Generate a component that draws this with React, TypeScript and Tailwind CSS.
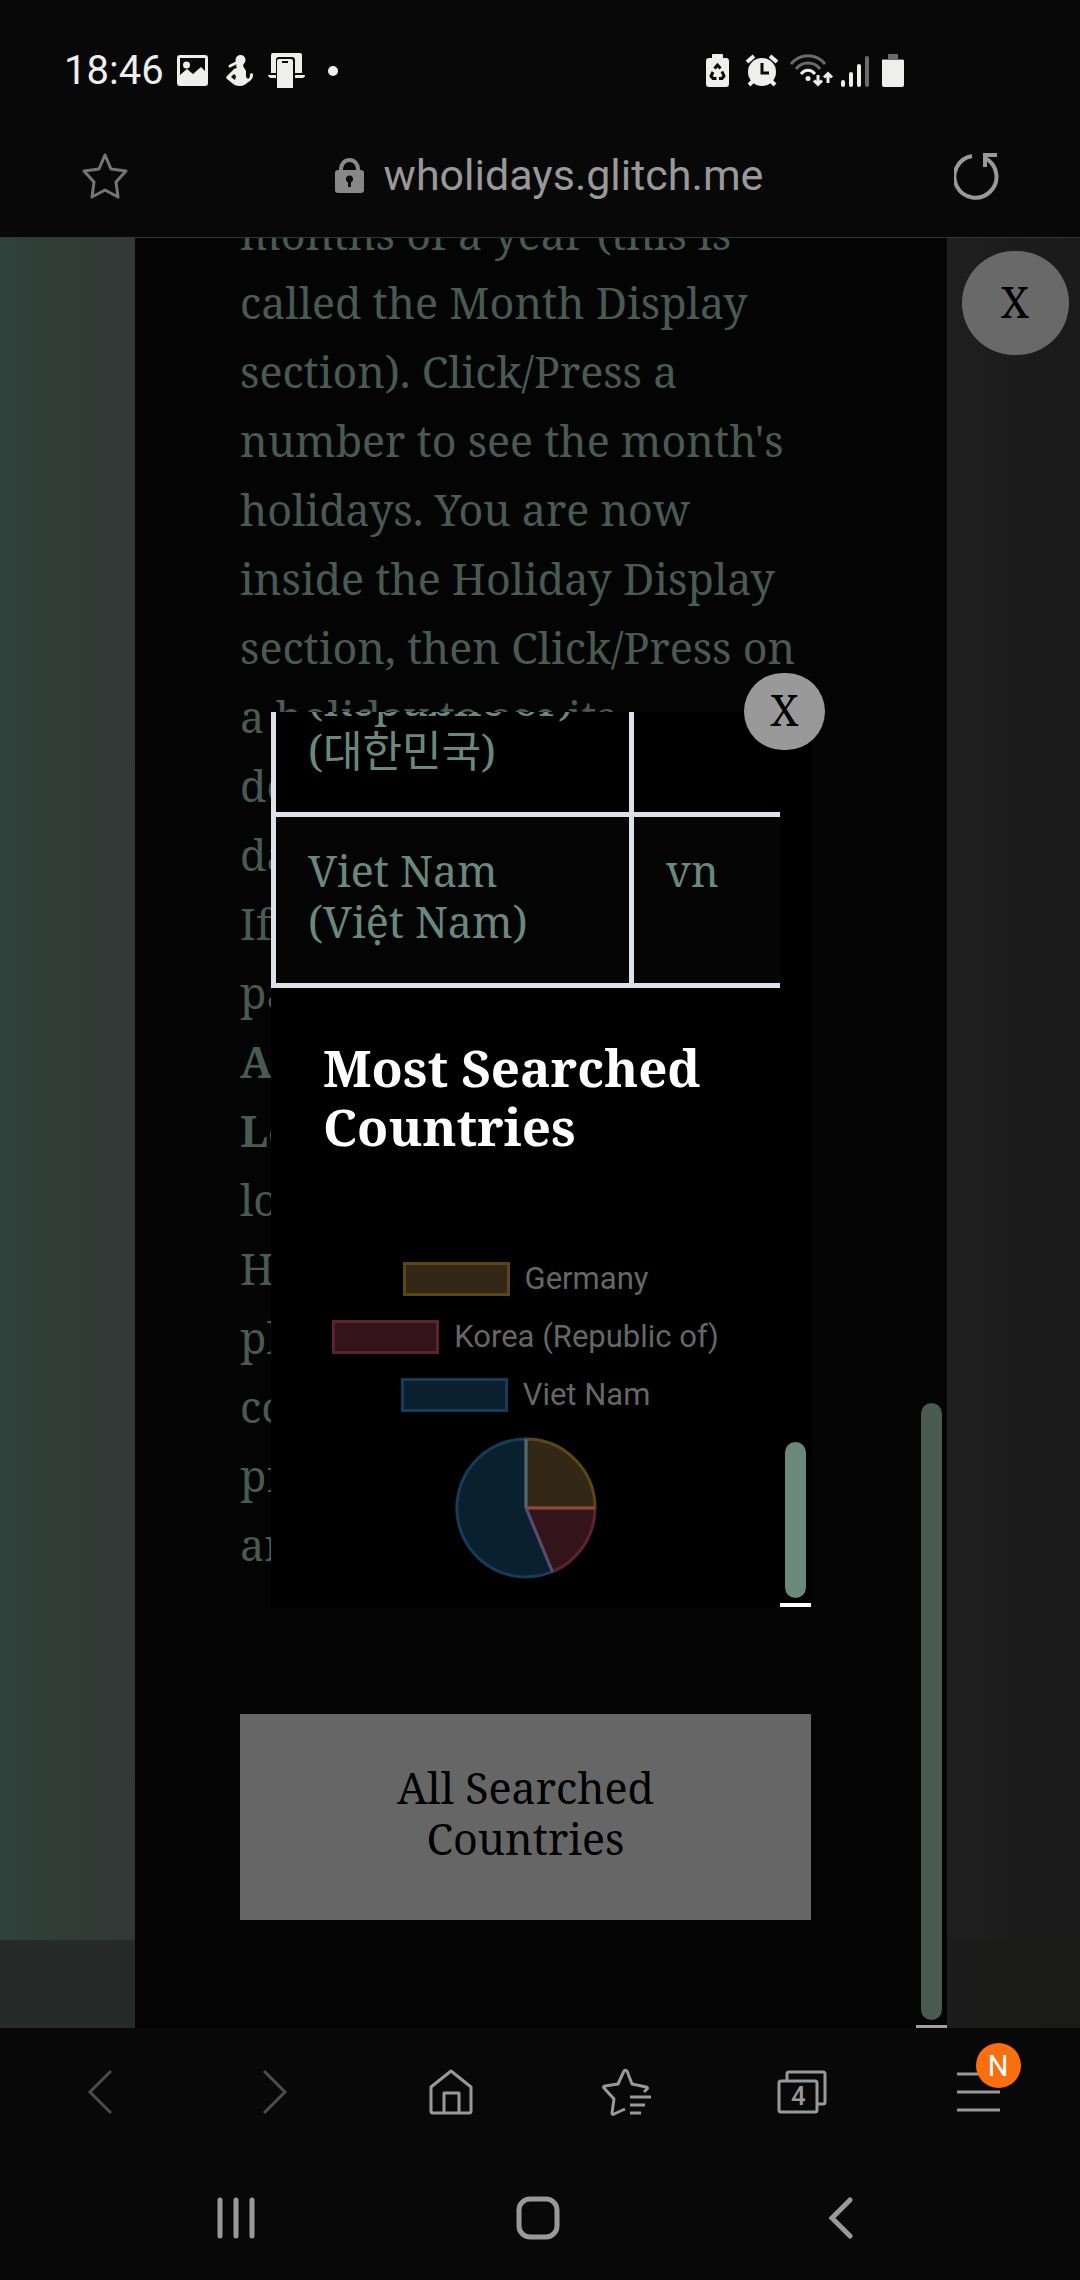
import type { ReactNode } from "react";

const SERIF = "font-['Noto_Serif','DejaVu_Serif_Condensed','DejaVu_Serif','Noto_Sans_CJK_KR',serif]";

function StatusBar() {
  return (
    <div className="flex h-[117px] shrink-0 items-center justify-between pt-6 pr-[176px] pl-[64px] text-[#eeeeec]">
      <div className="flex items-center">
        <time className="w-[113px] text-[40px] leading-none">18:46</time>
        <svg width="31" height="31" viewBox="0 0 31 31" aria-hidden="true">
          <path
            fill="currentColor"
            fillRule="evenodd"
            d="M3 0h25a3 3 0 0 1 3 3v25a3 3 0 0 1-3 3H3a3 3 0 0 1-3-3V3a3 3 0 0 1 3-3Zm0 3v17l7-6 6 5 8-7 4 4V3H3Z"
          />
          <circle cx="9.5" cy="10" r="3.5" fill="currentColor" />
        </svg>
        <svg className="ml-[18px]" width="28" height="31" viewBox="0 0 28 31" aria-hidden="true">
          <circle cx="14.500" cy="5" r="5" fill="currentColor" />
          <path
            fill="currentColor"
            d="M11 8h7l-1 3 3 5v6l2 2c2-1 2-3 2-5 1-1 3-1 3 1 0 4-3 6-6 8-2 2-4 3-7 3-4 0-6-1-8-3l-5-4c-1-1-1-2 0-3l6-6c1-1 2-2 4-2l-1-2Z"
          />
          <path fill="none" stroke="currentColor" strokeWidth="3" strokeLinecap="round" d="M4 11l6-3" />
          <path fill="#080808" d="M8 19l-3 3 4 3 1-4Z" />
        </svg>
        <svg className="ml-[14px]" width="37" height="35" viewBox="0 0 37 35" aria-hidden="true">
          <path
            fill="currentColor"
            d="M3 2a2 2 0 0 1 2-2h27a2 2 0 0 1 2 2v18h-7V7a3 3 0 0 0-3-3H11a3 3 0 0 0-3 3v13H3ZM0 22h8v3H3c-1 0-3-1-3-3ZM27 22h10c0 2-1 3-3 3h-7ZM9 8a2 2 0 0 1 2-2h12a2 2 0 0 1 2 2v27H9Z"
          />
          <path stroke="#080808" strokeWidth="2" d="M14 9h6" />
        </svg>
        <span className="ml-[23px] size-[10px] rounded-full bg-[#eeeeec]" />
      </div>
      <div className="flex items-center">
        <svg width="23" height="33" viewBox="0 0 23 33" aria-hidden="true">
          <path
            fill="currentColor"
            d="M6 1a1 1 0 0 1 1-1h9a1 1 0 0 1 1 1v3h3a3 3 0 0 1 3 3v23a3 3 0 0 1-3 3H3a3 3 0 0 1-3-3V7a3 3 0 0 1 3-3h3Z"
          />
          <path
            fill="none"
            stroke="#080808"
            strokeWidth="3"
            d="M8.500 14.500l3-3.500 3 3.500M16 17.500l2 4.500-2 2.500h-3M10.500 24.500H7L5 22l2-4"
          />
        </svg>
        <svg className="ml-4" width="34" height="33" viewBox="0 0 34 33" aria-hidden="true">
          <g stroke="currentColor" strokeWidth="4">
            <path d="M2 8l7-6M32 8l-7-6M8 27l-4 4M26 27l4 4" />
          </g>
          <circle cx="17" cy="18" r="14" fill="currentColor" />
          <path fill="none" stroke="#080808" strokeWidth="3" d="M17 9v10h7" />
        </svg>
        <svg className="ml-[11px]" width="43" height="33" viewBox="0 0 43 33" aria-hidden="true">
          <g fill="none" strokeWidth="3">
            <path stroke="#6b6b6b" d="M1 10C10-1 26-1 35 10M6 15c6-8 18-8 24 0" />
            <path stroke="currentColor" d="M11 20c4-5 10-5 14 0" />
          </g>
          <circle cx="18" cy="24.500" r="2.500" fill="currentColor" />
          <path
            fill="none"
            stroke="currentColor"
            strokeWidth="3"
            d="M28 21v9M24 26.500l4 4 4-4M38 29v-8M34 23.500l4-4 4 4"
          />
        </svg>
        <svg className="ml-2" width="28" height="32" viewBox="0 0 28 32" aria-hidden="true">
          <g strokeWidth="4" strokeLinecap="round">
            <path stroke="currentColor" d="M2 27v3M10 19v11M18 11v19" />
            <path stroke="#6b6b6b" d="M26 3v27" />
          </g>
        </svg>
        <svg className="ml-[13px]" width="22" height="33" viewBox="0 0 22 33" aria-hidden="true">
          <path fill="#6b6b6b" d="M6 0h10v5h5v2H0V5h6Z" />
          <path fill="currentColor" d="M0 6h22v25a2 2 0 0 1-2 2H2a2 2 0 0 1-2-2Z" />
        </svg>
      </div>
    </div>
  );
}

function AddressBar() {
  return (
    <div className="flex h-[121px] shrink-0 items-center justify-between border-b border-[#343434] pr-20 pb-[3px] pl-[82px] text-[#999999]">
      <button type="button" aria-label="Bookmark this page" className="text-[#747474]">
        <svg width="46" height="46" viewBox="0 0 46 46" fill="none" stroke="currentColor" strokeWidth="3" strokeLinejoin="round">
          <path d="M23 2l6 14 15 2-10 11 2 15-13-7-13 7 2-15L2 18l15-2Z" />
        </svg>
      </button>
      <div className="ml-4 flex items-center gap-5">
        <svg width="29" height="35" viewBox="0 0 29 35" className="text-[#888888]" aria-hidden="true">
          <path fill="none" stroke="currentColor" strokeWidth="4" d="M6 14v-3a8.500 9 0 0 1 17 0v3" />
          <rect y="12" width="29" height="23" rx="3" fill="currentColor" />
          <circle cx="14.500" cy="21" r="3.500" fill="#080808" />
          <path stroke="#080808" strokeWidth="3" d="M14.500 21v8" />
        </svg>
        <span className="text-[43px] leading-none">wholidays.glitch.me</span>
      </div>
      <button type="button" aria-label="Reload">
        <svg width="46" height="48" viewBox="0 0 46 48" fill="none" stroke="currentColor" strokeWidth="4">
          <path d="M18 4A21 21 0 1 0 31 6" />
          <path d="M43 3H31v12" />
        </svg>
      </button>
    </div>
  );
}

const instructions: { text: string; strong?: boolean }[] = [
  { text: "months of a year (this is" },
  { text: "called the Month Display" },
  { text: "section). Click/Press a" },
  { text: "number to see the month's" },
  { text: "holidays. You are now" },
  { text: "inside the Holiday Display" },
  { text: "section, then Click/Press on" },
  { text: "a holiday to see its" },
  { text: "description and the" },
  { text: "date of the holiday." },
  { text: "If you are on a" },
  { text: "page with the" },
  { text: "Automatic", strong: true },
  { text: "Location", strong: true },
  { text: "local country set," },
  { text: "Holidays of the" },
  { text: "place are shown" },
  { text: "countries can be" },
  { text: "pressed as they" },
  { text: "are listed." },
];

function InstructionsPanel() {
  return (
    <section className="flex min-w-0 flex-1 overflow-hidden bg-[#040404]">
      <div className="flex min-w-0 flex-1 flex-col justify-end px-[105px] pb-[108px]">
        <p className="shrink-0 text-[43px] leading-[69px] whitespace-nowrap text-[#485a52]">
          {instructions.map((line) => (
            <span key={line.text} className={line.strong ? "block font-bold" : "block"}>
              {line.text}
            </span>
          ))}
        </p>
        <button
          type="button"
          className="mt-[135px] shrink-0 bg-[#666666] px-[140px] pt-12 pb-14 text-[43px] leading-[51px] text-black"
        >
          All Searched Countries
        </button>
      </div>
      <div className="flex w-[31px] flex-col items-center justify-end border-b-[3px] border-[#a0a0a0] pb-[5px]">
        <span className="h-[617px] w-[21px] rounded-full bg-[#485a52]" />
      </div>
    </section>
  );
}

const countries = [
  { names: ["Korea", "(Republic of)", "(대한민국)"], code: "kr" },
  { names: ["Viet Nam", "(Việt Nam)"], code: "vn" },
];

const legend = [
  { label: "Germany", swatch: "border-[#5c4618] bg-[#332715]" },
  { label: "Korea (Republic of)", swatch: "border-[#5c2230] bg-[#33141a]" },
  { label: "Viet Nam", swatch: "border-[#153c58] bg-[#0a202e]" },
];

function PieChart() {
  return (
    <svg className="mt-[25px]" width="142" height="142" viewBox="-71 -71 142 142" role="img" aria-label="Most searched countries">
      <g strokeWidth="3">
        <path fill="#332715" stroke="#5c4618" d="M0 0V-69A69 69 0 0 1 69 0Z" />
        <path fill="#33141a" stroke="#5c2230" d="M0 0H69A69 69 0 0 1 26.400 63.700Z" />
        <path fill="#0a202e" stroke="#153c58" d="M0 0L26.400 63.700A69 69 0 1 1 0-69Z" />
        <path stroke="#8a4a3c" d="M0 0H69" />
        <path stroke="#56696a" d="M0 0V-69" />
        <path stroke="#594a70" d="M0 0L26.400 63.700" />
      </g>
    </svg>
  );
}

function CountriesDialog() {
  return (
    <div role="dialog" aria-label="All searched countries" className="absolute top-[474px] left-1/4 ml-px flex h-1/2 w-1/2 bg-black">
      <div className="flex min-w-0 flex-1 flex-col justify-end overflow-hidden pb-7">
        <table className="w-full shrink-0 table-fixed border-separate border-spacing-0 border-b-[5px] border-l-[5px] border-[#dfe1e8] text-left text-[43px] leading-[51px] text-[#6b887c]">
          <tbody>
            {countries.map((country) => (
              <tr key={country.code} className="align-top even:bg-[#040404]">
                <td className="w-[358px] border-t-[5px] border-r-[5px] border-[#dfe1e8] px-8 pt-7 pb-9">
                  {country.names.map((name) => (
                    <span key={name} className="block whitespace-nowrap">
                      {name}
                    </span>
                  ))}
                </td>
                <td className="border-t-[5px] border-[#dfe1e8] px-8 pt-7 pb-9">{country.code}</td>
              </tr>
            ))}
          </tbody>
        </table>
        <h2 className="mt-[50px] shrink-0 px-[52px] text-[51px] leading-[59px] font-bold text-white">
          Most Searched Countries
        </h2>
        <div className="mt-[106px] flex shrink-0 flex-col items-center font-[Roboto,sans-serif]">
          <ul className="flex flex-col items-center gap-6 text-[31px] leading-[34px] text-[#666666]">
            {legend.map((item) => (
              <li key={item.label} className="flex gap-[15px]">
                <span className={`w-[107px] border-[3px] ${item.swatch}`} />
                {item.label}
              </li>
            ))}
          </ul>
          <PieChart />
        </div>
      </div>
      <div className="flex w-[31px] flex-col items-center justify-end border-b-4 border-white pb-[5px]">
        <span className="h-[156px] w-[21px] rounded-full bg-[#6b887c]" />
      </div>
      <button
        type="button"
        aria-label="Close dialog"
        className="absolute -top-[39px] -right-[14px] h-[77px] w-[81px] rounded-full bg-[#999999] pb-1 text-[43px] leading-none text-black"
      >
        X
      </button>
    </div>
  );
}

function ToolButton({ label, dim, children }: { label: string; dim?: boolean; children: ReactNode }) {
  return (
    <button type="button" aria-label={label} className={dim ? "flex justify-center text-[#4c4c4c]" : "flex justify-center text-[#999999]"}>
      {children}
    </button>
  );
}

function BrowserToolbar() {
  return (
    <nav aria-label="Browser" className="grid h-32 shrink-0 grid-cols-6 items-center pr-[14px] pl-3">
      <ToolButton label="Back" dim>
        <svg width="26" height="46" viewBox="0 0 26 46" fill="none" stroke="currentColor" strokeWidth="3">
          <path d="M24 2L3 23l21 21" />
        </svg>
      </ToolButton>
      <ToolButton label="Forward" dim>
        <svg width="26" height="46" viewBox="0 0 26 46" fill="none" stroke="currentColor" strokeWidth="3">
          <path d="M2 2l21 21L2 44" />
        </svg>
      </ToolButton>
      <ToolButton label="Home">
        <svg width="46" height="46" viewBox="0 0 46 46" fill="none" stroke="currentColor" strokeWidth="3" strokeLinejoin="round">
          <path d="M3 18L23 2l20 16v24a2 2 0 0 1-2 2H5a2 2 0 0 1-2-2Z" />
          <path d="M16 44V24h15v20" />
        </svg>
      </ToolButton>
      <ToolButton label="Bookmarks">
        <svg width="50" height="48" viewBox="0 0 50 48" fill="none" stroke="currentColor" strokeWidth="3" strokeLinejoin="round">
          <path d="M42 24l3-3c1-1 0-2-1-2l-14-3-5-13c-1-1-2-1-3 0l-6 13-13 2c-1 0-2 1-1 2l10 11-2 14c0 1 1 2 2 1l11-5" />
          <path d="M28 29h21M28 37h15M28 45h11" />
        </svg>
      </ToolButton>
      <ToolButton label="4 open tabs">
        <span className="relative flex">
          <svg width="50" height="44" viewBox="0 0 50 44" fill="none" stroke="currentColor" strokeWidth="3">
            <rect x="2" y="11" width="38" height="31" rx="2" />
            <path d="M10 11V4a2 2 0 0 1 2-2h34a2 2 0 0 1 2 2v28a2 2 0 0 1-2 2h-6" />
          </svg>
          <span className="absolute top-[9px] left-0 w-[42px] text-center text-[26px] leading-[34px] font-medium">4</span>
        </span>
      </ToolButton>
      <ToolButton label="Menu">
        <span className="relative flex">
          <svg width="43" height="42" viewBox="0 0 43 42" stroke="currentColor" strokeWidth="3">
            <path d="M0 3h43M0 21h43M0 39h43" />
          </svg>
          <span className="absolute -top-7 -right-[21px] size-[45px] rounded-full bg-[#f96f10] text-center text-[29px] leading-[47px] text-white">
            N
          </span>
        </span>
      </ToolButton>
    </nav>
  );
}

function SystemNav() {
  return (
    <nav aria-label="System" className="grid h-[124px] shrink-0 grid-cols-3 items-center pr-[88px] pl-[85px]">
      <ToolButton label="Recent apps">
        <svg width="38" height="42" viewBox="0 0 38 42" stroke="currentColor" strokeWidth="5" strokeLinecap="round">
          <path d="M3 3v36M19 3v36M35 3v36" />
        </svg>
      </ToolButton>
      <ToolButton label="Home screen">
        <svg width="44" height="44" viewBox="0 0 44 44" fill="none" stroke="currentColor" strokeWidth="5">
          <rect x="3" y="3" width="38" height="38" rx="11" />
        </svg>
      </ToolButton>
      <ToolButton label="Go back">
        <svg width="26" height="42" viewBox="0 0 26 42" fill="none" stroke="currentColor" strokeWidth="5" strokeLinecap="round">
          <path d="M22 3L4 21l18 18" />
        </svg>
      </ToolButton>
    </nav>
  );
}

export default function App() {
  return (
    <div className="flex h-screen flex-col bg-[#080808] font-[Roboto,sans-serif]">
      <header>
        <StatusBar />
        <AddressBar />
      </header>
      <main className={`relative flex min-h-0 flex-1 ${SERIF}`}>
        <div className="flex w-1/8 flex-col">
          <div className="flex-1 bg-linear-to-r from-[#30403a] via-[#303d37] to-[#323836]" />
          <div className="h-[88px] bg-[#262a28]" />
        </div>
        <InstructionsPanel />
        <div className="flex w-[133px] flex-col">
          <div className="flex flex-1 justify-center bg-linear-to-r from-[#1f1f1f] to-[#1a1a1a] pt-[13px]">
            <button
              type="button"
              aria-label="Close instructions"
              className="ml-[3px] h-[104px] w-[107px] rounded-full bg-[#696969] pb-1 text-[43px] leading-none text-black"
            >
              X
            </button>
          </div>
          <div className="h-[88px] bg-linear-to-r from-[#1c1c1c] to-[#1a1a18]" />
        </div>
        <CountriesDialog />
      </main>
      <footer>
        <BrowserToolbar />
        <SystemNav />
      </footer>
    </div>
  );
}
